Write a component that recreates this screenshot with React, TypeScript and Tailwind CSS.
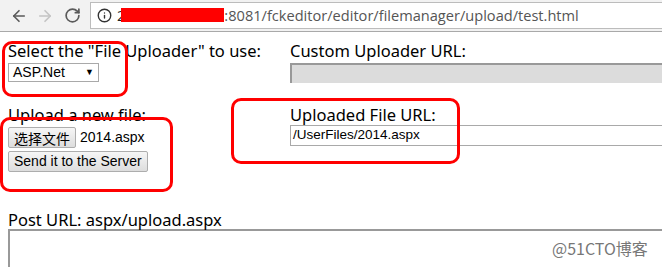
import { ArrowLeft, ArrowRight, RotateCw, Info } from "lucide-react";

const label = "font-['Noto_Sans',sans-serif] text-[16.5px] leading-[18px] text-black";
const btn =
  "h-[21px] px-[5px] border border-[#adadad] bg-gradient-to-b from-[#f6f6f6] to-[#dddddd] rounded-[2px] text-black font-['Liberation_Sans',sans-serif] leading-none";

export default function App() {
  return (
    <div className="relative w-[662px] h-[267px] overflow-hidden bg-white">
      {/* browser bar */}
      <div className="flex items-center h-[32px] bg-[#f2f2f2] border-b border-[#a9a9a9] pl-[10px]">
        <ArrowLeft className="w-[18px] h-[18px] text-[#5a5a5a]" strokeWidth={2.2} />
        <ArrowRight className="w-[18px] h-[18px] text-[#c4c4c4] ml-[8px]" strokeWidth={2.2} />
        <RotateCw className="w-[17px] h-[17px] text-[#5a5a5a] ml-[10px]" strokeWidth={2.4} />
        <div className="ml-[9px] flex items-center h-[27px] flex-1 bg-white border border-[#bcbcbc] border-r-0 pl-[6px]">
          <Info className="w-[15px] h-[15px] text-[#333]" strokeWidth={2.2} />
          <span className="ml-[5px] font-['Open_Sans',sans-serif] text-[14.6px] text-[#555] flex items-center">
            <span className="text-[#222]">2</span>
            <span className="inline-block w-[103px] h-[14px] bg-[#ff0000] -ml-[4px]" />
            <span className="text-[#555]">:8081/fckeditor/editor/filemanager/upload/test.html</span>
          </span>
        </div>
      </div>

      {/* form */}
      <div className="pl-[8px] pt-[10px]">
        <div className="flex">
          <div className="w-[282px]">
            <div className={label}>Select the "File Uploader" to use:</div>
            <div className="mt-[3px] w-[91px] h-[19px] border border-[#a9a9a9] flex items-center justify-between px-[4px] text-[14px] font-['Liberation_Sans',sans-serif]">
              <span>ASP.Net</span>
              <span className="text-[9px]">▼</span>
            </div>
          </div>
          <div className="flex-1">
            <div className={label}>Custom Uploader URL:</div>
            <div className="mt-[3px] h-[20px] bg-[#dcdcdc] border-t-2 border-l-2 border-[#999]" />
          </div>
        </div>

        <div className="flex mt-[23px]">
          <div className="w-[282px]">
            <div className={label}>Upload a new file:</div>
            <div className="mt-[3px] flex items-center">
              <button className={`${btn} font-['Noto_Sans_CJK_SC',sans-serif] text-[14px]`}>选择文件</button>
              <span className="ml-[4px] text-[14px] font-['Liberation_Sans',sans-serif]">2014.aspx</span>
            </div>
            <button className={`${btn} mt-[1px] text-[14px]`}>Send it to the Server</button>
          </div>
          <div className="flex-1">
            <div className={label}>Uploaded File URL:</div>
            <div className="mt-[1px] h-[21px] border border-[#a9a9a9] border-r-0 flex items-center pl-[2px] text-[13.5px] font-['Liberation_Sans',sans-serif]">
              /UserFiles/2014.aspx
            </div>
          </div>
        </div>

        <div className={`${label} mt-[39px]`}>Post URL: aspx/upload.aspx</div>
        <div className="h-[60px] border-2 border-[#999] border-r-0" />
      </div>

      {/* annotations */}
      <div className="absolute left-[2px] top-[41px] w-[126px] h-[56px] border-[3px] border-[#ff0000] rounded-[10px]" />
      <div className="absolute left-[0px] top-[117px] w-[173px] h-[75px] border-[3px] border-[#ff0000] rounded-[10px]" />
      <div className="absolute left-[231px] top-[98px] w-[229px] h-[66px] border-[3px] border-[#ff0000] rounded-[10px]" />
      <div className="absolute left-[552px] top-[240px] text-[16px] text-[#777] font-['Noto_Sans_CJK_SC',sans-serif] leading-none">
        @51CTO博客
      </div>
    </div>
  );
}
